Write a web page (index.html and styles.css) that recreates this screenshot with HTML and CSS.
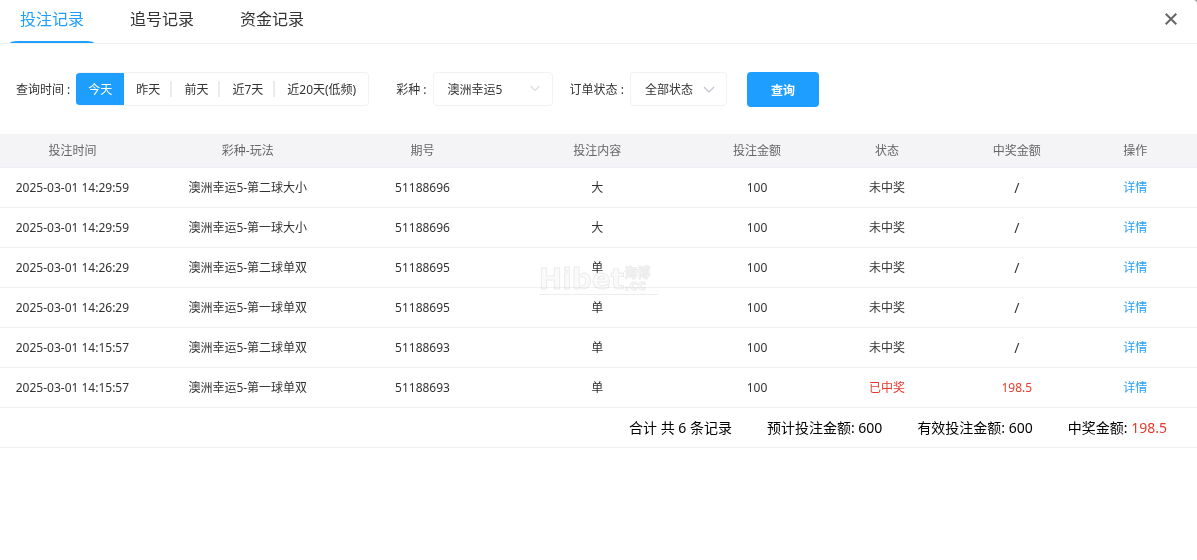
FILE: index.html
```html
<!DOCTYPE html>
<html lang="zh-CN">
<head>
    <meta charset="UTF-8">
    <meta name="viewport" content="width=device-width, initial-scale=1.0">
    <title>投注记录</title>
    <link rel="stylesheet" href="styles.css">
</head>
<body>

<div class="dialog">
    <header class="header">
        <nav class="tabs">
            <a href="#bets" class="tab active">投注记录</a>
            <a href="#chase" class="tab">追号记录</a>
            <a href="#funds" class="tab">资金记录</a>
        </nav>
        <button type="button" class="close" aria-label="关闭">
            <svg width="12" height="12" viewBox="0 0 12 12"><path d="M0.7 0.7L11.3 11.3M11.3 0.7L0.7 11.3" stroke="#666" stroke-width="2" fill="none"/></svg>
        </button>
    </header>

    <form class="filters">
        <div class="field field-time">
            <span class="field-label" id="timeLabel">查询时间 :</span>
            <div class="range" role="group" aria-labelledby="timeLabel">
                <button type="button" class="range-item active">今天</button>
                <button type="button" class="range-item">昨天</button>
                <button type="button" class="range-item">前天</button>
                <button type="button" class="range-item">近7天</button>
                <button type="button" class="range-item">近20天(低频)</button>
            </div>
        </div>

        <div class="field field-game">
            <label class="field-label" for="game">彩种 :</label>
            <div class="select select-game">
                <select id="game">
                    <option>澳洲幸运5</option>
                </select>
                <svg class="arrow" width="12" height="8" viewBox="0 0 12 8"><path d="M1.5 1L6 5.5L10.5 1" stroke="#c0c4cc" fill="none"/></svg>
            </div>
        </div>

        <div class="field field-status">
            <label class="field-label" for="status">订单状态 :</label>
            <div class="select select-status">
                <select id="status">
                    <option>全部状态</option>
                </select>
                <svg class="arrow" width="12" height="8" viewBox="0 0 12 8"><path d="M1 1L6 6L11 1" stroke="#c0c4cc" stroke-width="1.2" fill="none"/></svg>
            </div>
        </div>

        <button type="button" class="search">查询</button>
    </form>

    <div class="records">
        <table class="table">
            <colgroup>
                <col class="col-time">
                <col class="col-play">
                <col class="col-issue">
                <col class="col-content">
                <col class="col-amount">
                <col class="col-status">
                <col class="col-win">
                <col class="col-action">
            </colgroup>
            <thead>
                <tr>
                    <th>投注时间</th>
                    <th>彩种-玩法</th>
                    <th>期号</th>
                    <th>投注内容</th>
                    <th>投注金额</th>
                    <th>状态</th>
                    <th>中奖金额</th>
                    <th>操作</th>
                </tr>
            </thead>
            <tbody>
                <tr>
                    <td>2025-03-01 14:29:59</td>
                    <td>澳洲幸运5-第二球大小</td>
                    <td>51188696</td>
                    <td>大</td>
                    <td>100</td>
                    <td>未中奖</td>
                    <td class="none">/</td>
                    <td><a href="#detail">详情</a></td>
                </tr>
                <tr>
                    <td>2025-03-01 14:29:59</td>
                    <td>澳洲幸运5-第一球大小</td>
                    <td>51188696</td>
                    <td>大</td>
                    <td>100</td>
                    <td>未中奖</td>
                    <td class="none">/</td>
                    <td><a href="#detail">详情</a></td>
                </tr>
                <tr>
                    <td>2025-03-01 14:26:29</td>
                    <td>澳洲幸运5-第二球单双</td>
                    <td>51188695</td>
                    <td>单</td>
                    <td>100</td>
                    <td>未中奖</td>
                    <td class="none">/</td>
                    <td><a href="#detail">详情</a></td>
                </tr>
                <tr>
                    <td>2025-03-01 14:26:29</td>
                    <td>澳洲幸运5-第一球单双</td>
                    <td>51188695</td>
                    <td>单</td>
                    <td>100</td>
                    <td>未中奖</td>
                    <td class="none">/</td>
                    <td><a href="#detail">详情</a></td>
                </tr>
                <tr>
                    <td>2025-03-01 14:15:57</td>
                    <td>澳洲幸运5-第二球单双</td>
                    <td>51188693</td>
                    <td>单</td>
                    <td>100</td>
                    <td>未中奖</td>
                    <td class="none">/</td>
                    <td><a href="#detail">详情</a></td>
                </tr>
                <tr>
                    <td>2025-03-01 14:15:57</td>
                    <td>澳洲幸运5-第一球单双</td>
                    <td>51188693</td>
                    <td>单</td>
                    <td>100</td>
                    <td class="win">已中奖</td>
                    <td class="win">198.5</td>
                    <td><a href="#detail">详情</a></td>
                </tr>
            </tbody>
        </table>

        <div class="summary">
            <span>合计 共 6 条记录</span>
            <span>预计投注金额: 600</span>
            <span>有效投注金额: 600</span>
            <span>中奖金额: <span class="win">198.5</span></span>
        </div>
    </div>

    <div class="watermark">
        <div class="mark">
            <span class="mark-name">Hibet</span>
            <span class="mark-side">
                <span class="mark-cn">海博</span>
                <span class="mark-cc">.cc</span>
            </span>
        </div>
    </div>
</div>

</body>
</html>
```
FILE: styles.css
```css
* {
    box-sizing: border-box;
}

body {
    margin: 0;
    background-color: #999;
    color: #333;
    font-family: "Noto Sans", "Noto Sans CJK SC", sans-serif;
    font-size: 12px;
}

button, select {
    font-family: inherit;
    font-size: 12px;
    color: #333;
    cursor: pointer;
}

a {
    color: #1e9fff;
    text-decoration: none;
}

.dialog {
    position: relative;
    min-height: 100vh;
    background: #fff;
    border-top-right-radius: 4px;
}

.header {
    display: flex;
    justify-content: space-between;
    height: 44px;
    padding: 0 20px 0 10px;
    border-bottom: 1px solid #f2f2f2;
}

.tabs {
    display: flex;
    gap: 26px;
}

.tab {
    height: 43px;
    padding: 0 10px;
    line-height: 38px;
    font-size: 16px;
    color: #333;
}

.tab.active {
    position: relative;
    color: #1e9fff;
}

.tab.active::after {
    content: "";
    position: absolute;
    left: 0;
    right: 0;
    bottom: 0;
    height: 2px;
    background: #1e9fff;
    border-radius: 8px 8px 0 0 / 2px 2px 0 0;
}

.close {
    display: flex;
    align-items: center;
    height: 38px;
    padding: 0;
    border: none;
    background: none;
}

.filters {
    display: flex;
    align-items: flex-start;
    padding: 28px 16px 27px;
}

.field {
    display: flex;
    align-items: center;
    gap: 6px;
}

.field-time {
    margin-right: 27px;
}

.field-game {
    margin-right: 17px;
}

.field-status {
    margin-right: 20px;
}

.range {
    display: flex;
    height: 34px;
    border: 1px solid #f2f2f2;
    border-left: none;
    border-radius: 4px;
    overflow: hidden;
}

.range-item {
    position: relative;
    padding: 0 12px;
    border: none;
    background: none;
}

.range-item.active {
    background: #1e9fff;
    color: #fff;
}

.range-item:not(.active):not(:last-child)::after {
    content: "";
    position: absolute;
    top: 8px;
    right: 0;
    width: 2px;
    height: 16px;
    background: #ebebeb;
}

.select {
    position: relative;
    height: 34px;
}

.select-game {
    width: 120px;
}

.select-status {
    width: 97px;
}

.select select {
    appearance: none;
    width: 100%;
    height: 34px;
    padding: 0 14px;
    border: 1px solid #f2f2f2;
    border-radius: 4px;
    background: #fff;
}

.arrow {
    position: absolute;
    top: 13px;
    right: 12px;
    pointer-events: none;
}

.select-status .arrow {
    top: 14px;
}

.search {
    height: 35px;
    padding: 0 24px;
    border: none;
    border-radius: 4px;
    background: #1e9fff;
    color: #fff;
    font-weight: bold;
}

.table {
    width: 100%;
    table-layout: fixed;
    border-collapse: separate;
    border-spacing: 0;
    line-height: 16px;
}

.col-time {
    width: 12.1%;
}

.col-issue {
    width: 12%;
}

.col-play, .col-content {
    width: 17.2%;
}

.col-amount, .col-win {
    width: 9.5%;
}

.col-status {
    width: 12.2%;
}

.table th {
    height: 34px;
    padding: 0;
    background: #f4f4f7;
    border-bottom: 1px solid #ebeef5;
    color: #666;
    font-weight: normal;
}

.table td {
    height: 40px;
    padding: 0;
    border-bottom: 1px solid #f2f2f2;
    text-align: center;
}

.table .none {
    font-size: 14px;
}

.summary {
    display: flex;
    justify-content: flex-end;
    align-items: center;
    gap: 35px;
    height: 40px;
    padding-right: 30px;
    border-bottom: 1px solid #f2f2f2;
    line-height: 20px;
    font-size: 14px;
    color: #000;
}

.table .win, .summary .win {
    color: #e8392c;
}

/* faint site mark over the middle of the table */
.watermark {
    position: absolute;
    top: 266px;
    left: 0;
    right: 0;
    display: flex;
    justify-content: center;
    pointer-events: none;
    mix-blend-mode: multiply;
}

.mark {
    display: flex;
    padding-right: 8px;
    border-bottom: 1px solid #ececec;
    color: #fafafa;
    font-family: "DejaVu Sans", "Noto Sans CJK SC", sans-serif;
    font-weight: bold;
    -webkit-text-stroke: 1px #ececec;
}

.mark-name {
    font-size: 28px;
    line-height: 28px;
}

.mark-side {
    display: flex;
    flex-direction: column;
    font-size: 13px;
    line-height: 13px;
}

.mark-cc {
    font-size: 14px;
}
```
